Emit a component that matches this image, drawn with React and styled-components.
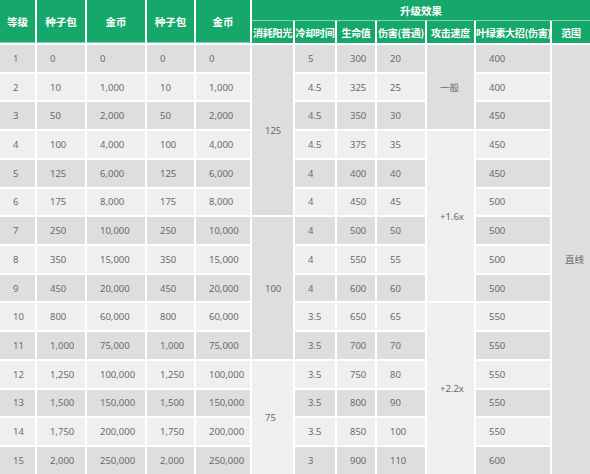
import React from "react";
import styled, { createGlobalStyle } from "styled-components";

const GlobalStyle = createGlobalStyle`
  html, body {
    margin: 0;
    padding: 0;
    background: #ffffff;
  }
`;

const widths = [37, 50, 60, 49, 56, 43, 42, 40, 50, 49, 76, 38];

const rows = [
  [1, "0", "0", "0", "0", "5", "300", "20", "400"],
  [2, "10", "1,000", "10", "1,000", "4.5", "325", "25", "400"],
  [3, "50", "2,000", "50", "2,000", "4.5", "350", "30", "450"],
  [4, "100", "4,000", "100", "4,000", "4.5", "375", "35", "450"],
  [5, "125", "6,000", "125", "6,000", "4", "400", "40", "450"],
  [6, "175", "8,000", "175", "8,000", "4", "450", "45", "500"],
  [7, "250", "10,000", "250", "10,000", "4", "500", "50", "500"],
  [8, "350", "15,000", "350", "15,000", "4", "550", "55", "500"],
  [9, "450", "20,000", "450", "20,000", "4", "600", "60", "500"],
  [10, "800", "60,000", "800", "60,000", "3.5", "650", "65", "550"],
  [11, "1,000", "75,000", "1,000", "75,000", "3.5", "700", "70", "550"],
  [12, "1,250", "100,000", "1,250", "100,000", "3.5", "750", "80", "550"],
  [13, "1,500", "150,000", "1,500", "150,000", "3.5", "800", "90", "550"],
  [14, "1,750", "200,000", "1,750", "200,000", "3.5", "850", "100", "550"],
  [15, "2,000", "250,000", "2,000", "250,000", "3", "900", "110", "600"],
];

// merged cells keyed by the level where they start
const sun = { 1: ["125", 6], 7: ["100", 5], 12: ["75", 4] };
const speed = { 1: ["一般", 3], 4: ["+1.6x", 6], 10: ["+2.2x", 6] };
const range = { 1: ["直线", 15] };

const App = () => {
  return (
    <>
      <GlobalStyle />
      <Table>
        <colgroup>
          {widths.map((w, i) => (
            <col key={i} style={{ width: w }} />
          ))}
        </colgroup>
        <thead>
          <HeadRow $h={21}>
            <HeadCell rowSpan={2}>等级</HeadCell>
            <HeadCell rowSpan={2}>种子包</HeadCell>
            <HeadCell rowSpan={2}>金币</HeadCell>
            <HeadCell rowSpan={2}>种子包</HeadCell>
            <HeadCell rowSpan={2}>金币</HeadCell>
            <HeadCell colSpan={7} $last>
              升级效果
            </HeadCell>
          </HeadRow>
          <HeadRow $h={22}>
            <SubHead>消耗阳光</SubHead>
            <SubHead>冷却时间</SubHead>
            <SubHead>生命值</SubHead>
            <SubHead>伤害(普通)</SubHead>
            <SubHead>攻击速度</SubHead>
            <SubHead>叶绿素大招(伤害)</SubHead>
            <SubHead $last>范围</SubHead>
          </HeadRow>
        </thead>
        <tbody>
          {rows.map((r) => {
            const [lv, s1, c1, s2, c2, cd, hp, dmg, leaf] = r;
            return (
              <Row key={lv} $odd={lv % 2 === 1}>
                <Cell>{lv}</Cell>
                <Cell>{s1}</Cell>
                <Cell>{c1}</Cell>
                <Cell>{s2}</Cell>
                <Cell>{c2}</Cell>
                {sun[lv] && <Cell rowSpan={sun[lv][1]}>{sun[lv][0]}</Cell>}
                <Cell>{cd}</Cell>
                <Cell>{hp}</Cell>
                <Cell>{dmg}</Cell>
                {speed[lv] && (
                  <Cell rowSpan={speed[lv][1]}>{speed[lv][0]}</Cell>
                )}
                <Cell>{leaf}</Cell>
                {range[lv] && (
                  <Cell rowSpan={range[lv][1]} $last>
                    {range[lv][0]}
                  </Cell>
                )}
              </Row>
            );
          })}
        </tbody>
      </Table>
    </>
  );
};

export default App;

const Table = styled.table`
  width: 590px;
  table-layout: fixed;
  border-collapse: separate;
  border-spacing: 0;
  font-family: "Noto Sans", "Noto Sans CJK SC", sans-serif;
`;

const HeadRow = styled.tr`
  height: ${(p) => p.$h}px;
  background-color: #16a86a;
`;

const HeadCell = styled.th`
  padding: 0;
  color: #ffffff;
  font-size: 10.5px;
  font-weight: 700;
  text-align: center;
  white-space: nowrap;
  overflow: hidden;
  border-right: ${(p) => (p.$last ? "none" : "2px solid #ffffff")};
  border-bottom: 1px solid #7fd3ad;
  font-family: "Noto Sans CJK SC", sans-serif;
`;

const SubHead = styled(HeadCell)`
  font-size: 10px;
  letter-spacing: -0.3px;
  border-bottom: none;
`;

const Row = styled.tr`
  height: 28.73px;
  background-color: ${(p) => (p.$odd ? "#dedede" : "#efefef")};
`;

const Cell = styled.td`
  padding: 0 0 0 13px;
  font-size: 9.5px;
  color: #6a6a6a;
  text-align: left;
  vertical-align: middle;
  white-space: nowrap;
  border-top: 2px solid #ffffff;
  border-right: ${(p) => (p.$last ? "none" : "2px solid #ffffff")};
`;
